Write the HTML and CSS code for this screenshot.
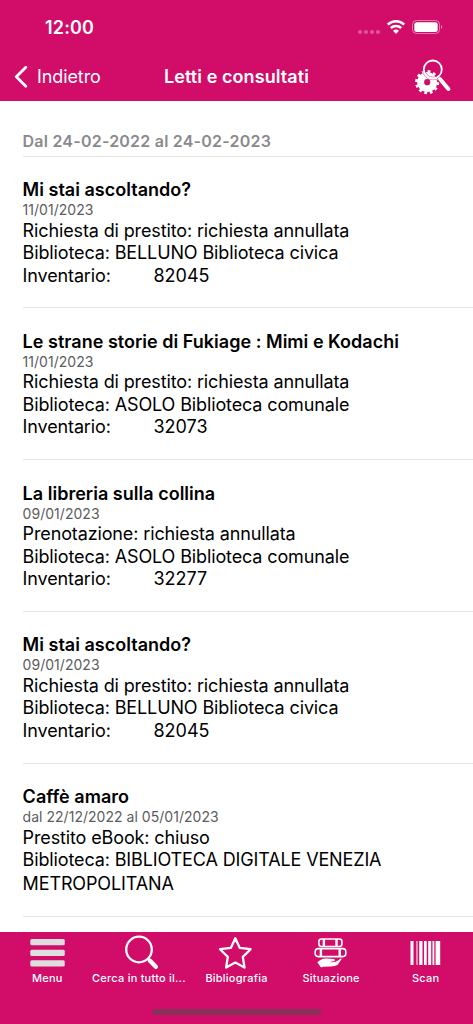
FILE: index.html
```html
<!DOCTYPE html>
<html lang="it">
<head>
  <meta charset="UTF-8">
  <meta name="viewport" content="width=device-width, initial-scale=1">
  <title>Letti e consultati</title>
  <link rel="stylesheet" href="styles.css">
</head>
<body>

  <header class="header">
    <div class="status">
      <span class="clock">12:00</span>
      <svg class="status-icons" width="88" height="20" viewBox="0 0 88 20">
        <g fill="#fff" opacity="0.3">
          <circle cx="3" cy="14" r="2"/>
          <circle cx="9" cy="14" r="2"/>
          <circle cx="15" cy="14" r="2"/>
          <circle cx="21" cy="14" r="2"/>
        </g>
        <g fill="none" stroke="#fff" stroke-width="2.5">
          <path d="M30.8 6.6 A12 12 0 0 1 47.2 6.6"/>
          <path d="M33.8 10 A7.6 7.6 0 0 1 44.2 10"/>
        </g>
        <path d="M36 12.7 A4.2 4.2 0 0 1 42 12.7 L39 15.9 Z" fill="#fff"/>
        <rect x="55.5" y="2.5" width="27" height="13" rx="4" fill="none" stroke="#fff" opacity="0.45"/>
        <rect x="57.3" y="4.2" width="23.4" height="9.7" rx="2.5" fill="#fff"/>
        <path d="M84 7 Q86.8 9 84 11 Z" fill="#fff" opacity="0.5"/>
      </svg>
    </div>
    <nav class="navbar">
      <a class="back">
        <svg width="14" height="22" viewBox="0 0 14 22"><path d="M11.8 1.3 L2.3 10.8 L11.8 20.3" fill="none" stroke="#fff" stroke-width="2.8" stroke-linecap="round" stroke-linejoin="round"/></svg>
        <span>Indietro</span>
      </a>
      <h1 class="title">Letti e consultati</h1>
      <svg class="search-settings" width="38" height="36" viewBox="0 0 38 36">
        <circle cx="13.2" cy="23.2" r="6.6" fill="none" stroke="#fff" stroke-width="7"/>
        <circle cx="13.2" cy="23.2" r="10.8" fill="none" stroke="#fff" stroke-width="2.6" stroke-dasharray="2.83 2.83"/>
        <circle cx="18.8" cy="10.5" r="7.8" fill="none" stroke="#d20c69" stroke-width="0.6"/>
        <circle cx="18.8" cy="10.5" r="10.2" fill="none" stroke="#d20c69" stroke-width="0.6"/>
        <circle cx="18.8" cy="10.5" r="9" fill="none" stroke="#fff" stroke-width="1.8"/>
        <path d="M25.2 19 L34.6 30.2" stroke="#d20c69" stroke-width="6"/>
        <path d="M26 20 L34.4 30" stroke="#fff" stroke-width="4" stroke-linecap="round"/>
      </svg>
    </nav>
  </header>

  <main class="content">
    <h2 class="period">Dal 24-02-2022 al 24-02-2023</h2>

    <article class="item">
      <h3>Mi stai ascoltando?</h3>
      <p class="date">11/01/2023</p>
      <p>Richiesta di prestito: richiesta annullata</p>
      <p>Biblioteca: BELLUNO Biblioteca civica</p>
      <p class="inventory"><span>Inventario:</span><span class="number">82045</span></p>
    </article>

    <article class="item">
      <h3>Le strane storie di Fukiage : Mimi e Kodachi</h3>
      <p class="date">11/01/2023</p>
      <p>Richiesta di prestito: richiesta annullata</p>
      <p>Biblioteca: ASOLO Biblioteca comunale</p>
      <p class="inventory"><span>Inventario:</span><span class="number">32073</span></p>
    </article>

    <article class="item">
      <h3>La libreria sulla collina</h3>
      <p class="date">09/01/2023</p>
      <p>Prenotazione: richiesta annullata</p>
      <p>Biblioteca: ASOLO Biblioteca comunale</p>
      <p class="inventory"><span>Inventario:</span><span class="number">32277</span></p>
    </article>

    <article class="item">
      <h3>Mi stai ascoltando?</h3>
      <p class="date">09/01/2023</p>
      <p>Richiesta di prestito: richiesta annullata</p>
      <p>Biblioteca: BELLUNO Biblioteca civica</p>
      <p class="inventory"><span>Inventario:</span><span class="number">82045</span></p>
    </article>

    <article class="item item-tall">
      <h3>Caffè amaro</h3>
      <p class="date">dal 22/12/2022 al 05/01/2023</p>
      <p>Prestito eBook: chiuso</p>
      <p class="wrapped">Biblioteca: BIBLIOTECA DIGITALE VENEZIA METROPOLITANA</p>
    </article>
  </main>

  <footer class="tabbar">
    <div class="tabs">
      <a class="tab">
        <svg width="36" height="36" viewBox="0 0 36 36" fill="#dedede">
          <rect x="1.3" y="4" width="34.5" height="6.3" rx="1.5"/>
          <rect x="1.3" y="14.7" width="34.5" height="6.3" rx="1.5"/>
          <rect x="1.3" y="25.2" width="34.5" height="6.3" rx="1.5"/>
        </svg>
        <span>Menu</span>
      </a>
      <a class="tab">
        <svg width="36" height="36" viewBox="0 0 36 36">
          <circle cx="15" cy="14.5" r="12.8" fill="none" stroke="#fff" stroke-width="2.3"/>
          <path d="M24.2 24 L26 25.8" stroke="#fff" stroke-width="2.6"/>
          <path d="M26 25.8 L31.8 31.8" stroke="#fff" stroke-width="4.4" stroke-linecap="round"/>
        </svg>
        <span class="cut">Cerca in tutto il...</span>
      </a>
      <a class="tab">
        <svg width="36" height="36" viewBox="0 0 36 36">
          <path d="M17.3 3.2 L21.8 12.9 L32.6 14.2 L24.8 21.9 L26.5 32.5 L17.3 27.6 L8.1 32.5 L9.8 21.9 L2 14.2 L12.8 12.9 Z" fill="none" stroke="#fff" stroke-width="2.3" stroke-linejoin="round"/>
        </svg>
        <span>Bibliografia</span>
      </a>
      <a class="tab">
        <svg width="36" height="36" viewBox="0 0 36 36">
          <g fill="none" stroke="#fff" stroke-width="1.6">
            <rect x="5.9" y="4" width="23" height="7.5" rx="2.5"/>
            <rect x="2.2" y="13.6" width="30.6" height="8" rx="3"/>
          </g>
          <path d="M10.9 4 V11.5 M23.5 4 V11.5 M7.9 13.6 V21.6 M26.7 13.6 V21.6" stroke="#fff" stroke-width="2.4"/>
          <path d="M4.3 27.3 Q9 22.8 14 23.6 L21 24 Q23 24.8 21.5 26 L17 27 Q22 28 25 25.5 L27.5 23.6 Q29.5 23.1 28 25 L24.5 30 Q22 31.5 17 31.4 L10 31.8 L8 32.6 Z" fill="#fff"/>
        </svg>
        <span>Situazione</span>
      </a>
      <a class="tab">
        <svg width="36" height="36" viewBox="0 0 36 36" fill="#fff">
          <rect x="2.5" y="6" width="3" height="24"/>
          <rect x="8.5" y="6" width="1" height="24"/>
          <rect x="11.2" y="6" width="3.3" height="24"/>
          <rect x="16" y="6" width="2.7" height="24"/>
          <rect x="20.2" y="6" width="3" height="24"/>
          <rect x="24.5" y="6" width="1.8" height="24"/>
          <rect x="27.6" y="6" width="4.6" height="24"/>
        </svg>
        <span>Scan</span>
      </a>
    </div>
    <div class="home-indicator"></div>
  </footer>

</body>
</html>
```
FILE: styles.css
```css
* {
  box-sizing: border-box;
}
body {
  margin: 0;
  height: 1024px;
  display: flex;
  flex-direction: column;
  overflow: hidden;
  background: #fff;
  color: #000;
  font-family: Inter, "Liberation Sans", sans-serif;
}
h1, h2, h3, p {
  margin: 0;
}
svg {
  display: block;
  flex: none;
}

/* header */
.header {
  height: 101px;
  flex: none;
  background: #d20c69;
  color: #fff;
}
.status {
  height: 53px;
  padding: 18px 28px 0 45px;
  display: flex;
  justify-content: space-between;
}
.clock {
  font-size: 18px;
  line-height: 20px;
  font-weight: 600;
  letter-spacing: 0.15px;
}
.navbar {
  height: 48px;
  padding: 0 21px 0 14px;
  display: grid;
  grid-template-columns: 118px 1fr 111px;
  align-items: center;
}
.back {
  display: flex;
  align-items: center;
  gap: 9px;
  font-size: 18px;
  line-height: 22px;
  letter-spacing: -0.1px;
}
.title {
  font-size: 18px;
  line-height: 22px;
  font-weight: 600;
  letter-spacing: 0.08px;
  text-align: center;
  white-space: nowrap;
}
.search-settings {
  justify-self: end;
}

/* list */
.content {
  flex: 1;
  padding-left: 22.6px;
  overflow: hidden;
}
.period {
  height: 55.6px;
  padding-top: 28.6px;
  border-bottom: 1px solid #e4e4e4;
  color: #8a8a8e;
  font-size: 16px;
  line-height: 22px;
  font-weight: 600;
  letter-spacing: 0.22px;
}
.item {
  height: 151.8px;
  padding-top: 21.5px;
  border-bottom: 1px solid #e4e4e4;
  font-size: 18px;
  line-height: 22.4px;
  letter-spacing: -0.13px;
  white-space: nowrap;
}
.item h3 {
  font-size: 18px;
  line-height: 23px;
  font-weight: 600;
  letter-spacing: 0.02px;
}
.item .date {
  color: #5c5c5c;
  font-size: 14px;
  line-height: 18px;
  padding-bottom: 0.6px;
  letter-spacing: 0.03px;
}
.item-tall {
  height: 153px;
}
.wrapped {
  width: 400px;
  line-height: 24px;
  margin-top: -0.8px;
  white-space: normal;
}
.inventory {
  display: grid;
  grid-template-columns: 130.9px auto;
}
.number {
  letter-spacing: 0;
}

/* bottom bar */
.tabbar {
  height: 92px;
  flex: none;
  background: #d20c69;
  color: #fff;
}
.tabs {
  height: 77px;
  padding-top: 3px;
  display: grid;
  grid-template-columns: repeat(5, minmax(0, 1fr));
}
.tab {
  display: flex;
  flex-direction: column;
  align-items: center;
  font-size: 11px;
  font-weight: 450;
  line-height: 14px;
  letter-spacing: 0.23px;
  white-space: nowrap;
}
.cut {
  margin-right: 6px;
}
.home-indicator {
  width: 169px;
  height: 6px;
  margin: 0 auto;
  border-radius: 3px;
  background: #853158;
}
```
